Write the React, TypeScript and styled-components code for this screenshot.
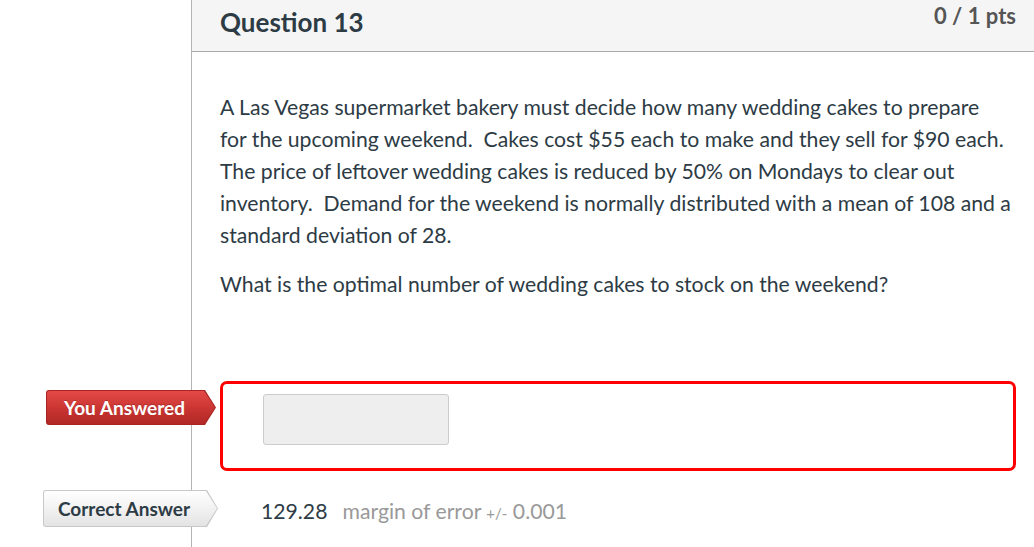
import React from "react";
import styled, { createGlobalStyle, css } from "styled-components";

const Global = createGlobalStyle`
  html, body { margin: 0; padding: 0; background: #fff; }
  body { font-family: Lato, "Open Sans", "Liberation Sans", sans-serif; color: #2d3b45; }
  * { box-sizing: border-box; }
`;

const Page = styled.div`
  display: flex;
  min-height: 547px;
  overflow: hidden;
`;

const Gutter = styled.div`
  width: 191px;
  flex: none;
`;

const Main = styled.div`
  flex: 1;
  border-left: 1px solid #b3b3b3;
  min-height: 547px;
`;

const Header = styled.div`
  height: 52px;
  background: #f5f5f5;
  border-bottom: 1px solid #aaaaaa;
  display: flex;
  justify-content: space-between;
  align-items: flex-start;
  padding: 0 18px 0 28px;
`;

const Title = styled.h2`
  margin: 6px 0 0;
  font-size: 26px;
  font-weight: 700;
  line-height: 32px;
  color: #2d3b45;
`;

const Points = styled.div`
  margin-top: 2px;
  font-size: 22px;
  font-weight: 700;
  line-height: 28px;
  color: #555;
`;

const Body = styled.div`
  padding: 39px 8px 0 28px;
`;

const Para = styled.p`
  margin: 0 0 17px;
  font-size: 21.2px;
  line-height: 32px;
  color: #2d3b45;
`;

const Answers = styled.div`
  margin-top: 81px;
  display: flex;
  flex-direction: column;
  gap: 19px;
`;

const AnswerRow = styled.div`
  position: relative;
  margin: 0 18px 0 28px;
`;

const WrongBox = styled.div`
  border: 3px solid #ff0000;
  border-radius: 7px;
  height: 90px;
  padding: 10px 40px;
`;

const Blank = styled.div`
  width: 186px;
  height: 51px;
  background: #eeeeee;
  border: 1px solid #cccccc;
  border-radius: 3px;
`;

const CorrectBox = styled.div`
  display: flex;
  align-items: baseline;
  gap: 15px;
  padding: 6px 41px;
  font-size: 21.2px;
  line-height: 30px;
`;

const Value = styled.span`
  color: #2d3b45;
`;

const Margin = styled.span`
  color: #999999;
`;

const Small = styled.span`
  font-size: 15px;
`;

const arrow = css`
  clip-path: polygon(0 0, calc(100% - 11px) 0, 100% 50%, calc(100% - 11px) 100%, 0 100%);
`;

const TagOuter = styled.div<{ $variant: "wrong" | "right"; $top: number }>`
  position: absolute;
  left: ${(p) => (p.$variant === "wrong" ? -174 : -177)}px;
  top: ${(p) => p.$top}px;
  width: ${(p) => (p.$variant === "wrong" ? 170 : 175)}px;
  height: ${(p) => (p.$variant === "wrong" ? 35 : 37)}px;
  padding: 1px;
  border-radius: 3px;
  background: ${(p) => (p.$variant === "wrong" ? "#a82422" : "#c8c8c8")};
  ${arrow}
`;

const TagInner = styled.div<{ $variant: "wrong" | "right" }>`
  height: 100%;
  border-radius: 2px;
  display: flex;
  align-items: center;
  padding-left: ${(p) => (p.$variant === "wrong" ? 17 : 14)}px;
  font-size: 19px;
  font-weight: 700;
  ${arrow}
  ${(p) =>
    p.$variant === "wrong"
      ? css`
          background: linear-gradient(#e44a47, #c93431 55%, #b02826);
          color: #fff;
          text-shadow: 0 -1px 0 rgba(0, 0, 0, 0.2);
        `
      : css`
          background: linear-gradient(#ffffff, #f2f2f2 50%, #e3e3e3);
          color: #2d3b45;
        `}
`;

export default function App() {
  return (
    <>
      <Global />
      <Page>
        <Gutter />
        <Main>
          <Header>
            <Title>Question 13</Title>
            <Points>0 / 1 pts</Points>
          </Header>
          <Body>
            <Para>
              A Las Vegas supermarket bakery must decide how many wedding cakes to prepare
              <br />
              for the upcoming weekend.{"\u00a0"} Cakes cost $55 each to make and they sell for $90 each.
              <br />
              The price of leftover wedding cakes is reduced by 50% on Mondays to clear out
              <br />
              inventory.{"\u00a0"} Demand for the weekend is normally distributed with a mean of 108 and a
              <br />
              standard deviation of 28.
            </Para>
            <Para>What is the optimal number of wedding cakes to stock on the weekend?</Para>
          </Body>
          <Answers>
            <AnswerRow>
              <TagOuter $variant="wrong" $top={9}>
                <TagInner $variant="wrong">You Answered</TagInner>
              </TagOuter>
              <WrongBox>
                <Blank />
              </WrongBox>
            </AnswerRow>
            <AnswerRow>
              <TagOuter $variant="right" $top={0}>
                <TagInner $variant="right">Correct Answer</TagInner>
              </TagOuter>
              <CorrectBox>
                <Value>129.28</Value>
                <Margin>
                  margin of error <Small>+/-</Small> 0.001
                </Margin>
              </CorrectBox>
            </AnswerRow>
          </Answers>
        </Main>
      </Page>
    </>
  );
}
